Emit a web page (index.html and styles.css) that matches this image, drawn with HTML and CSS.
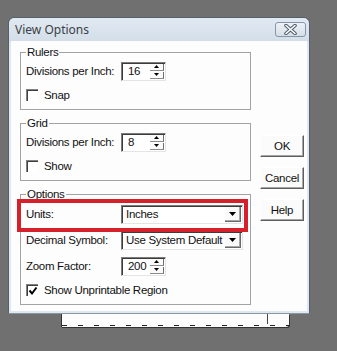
FILE: index.html
```html
<!DOCTYPE html>
<html>
<head>
  <title>View Options</title>
  <link rel="stylesheet" href="styles.css">
</head>
<body>

  <div class="window">
    <div class="titlebar">
      <span class="title">View Options</span>
      <div class="close-btn">
        <svg width="17" height="11" viewBox="0 0 17 11">
          <path d="M4 1.5 L13 9.5 M13 1.5 L4 9.5" stroke="#4e5a66" stroke-width="3.6" stroke-linecap="round"/>
          <path d="M4 1.5 L13 9.5 M13 1.5 L4 9.5" stroke="#fff" stroke-width="1.6" stroke-linecap="round"/>
        </svg>
      </div>
    </div>

    <div class="client">
      <div class="groups">
        <fieldset class="group">
          <legend>Rulers</legend>
          <div class="row first">
            <span class="label">Divisions per Inch:</span>
            <div class="spin">
              <span class="spin-value">16</span>
              <div class="spin-btns">
                <div class="spin-btn"><svg width="5" height="3" viewBox="0 0 5 3"><path d="M2.5 0 L5 3 L0 3 Z" fill="#000"/></svg></div>
                <div class="spin-btn"><svg width="5" height="3" viewBox="0 0 5 3"><path d="M0 0 L5 0 L2.5 3 Z" fill="#000"/></svg></div>
              </div>
            </div>
          </div>
          <div class="row check-row">
            <span class="checkbox"></span>
            <span>Snap</span>
          </div>
        </fieldset>

        <fieldset class="group">
          <legend>Grid</legend>
          <div class="row first">
            <span class="label">Divisions per Inch:</span>
            <div class="spin">
              <span class="spin-value">8</span>
              <div class="spin-btns">
                <div class="spin-btn"><svg width="5" height="3" viewBox="0 0 5 3"><path d="M2.5 0 L5 3 L0 3 Z" fill="#000"/></svg></div>
                <div class="spin-btn"><svg width="5" height="3" viewBox="0 0 5 3"><path d="M0 0 L5 0 L2.5 3 Z" fill="#000"/></svg></div>
              </div>
            </div>
          </div>
          <div class="row check-row">
            <span class="checkbox"></span>
            <span>Show</span>
          </div>
        </fieldset>

        <fieldset class="group">
          <legend>Options</legend>
          <div class="row options-first">
            <span class="label">Units:</span>
            <div class="combo">
              <span class="combo-value">Inches</span>
              <div class="combo-btn"><svg width="7" height="4" viewBox="0 0 7 4"><path d="M0 0 L7 0 L3.5 4 Z" fill="#000"/></svg></div>
            </div>
          </div>
          <div class="row options-row">
            <span class="label">Decimal Symbol:</span>
            <div class="combo">
              <span class="combo-value">Use System Default</span>
              <div class="combo-btn"><svg width="7" height="4" viewBox="0 0 7 4"><path d="M0 0 L7 0 L3.5 4 Z" fill="#000"/></svg></div>
            </div>
          </div>
          <div class="row options-row">
            <span class="label">Zoom Factor:</span>
            <div class="spin">
              <span class="spin-value">200</span>
              <div class="spin-btns">
                <div class="spin-btn"><svg width="5" height="3" viewBox="0 0 5 3"><path d="M2.5 0 L5 3 L0 3 Z" fill="#000"/></svg></div>
                <div class="spin-btn"><svg width="5" height="3" viewBox="0 0 5 3"><path d="M0 0 L5 0 L2.5 3 Z" fill="#000"/></svg></div>
              </div>
            </div>
          </div>
          <div class="row check-row">
            <span class="checkbox">
              <svg width="10" height="10" viewBox="0 0 10 10"><path d="M1.5 4.5 L4 7.5 L8.5 1.5" stroke="#000" stroke-width="2" fill="none"/></svg>
            </span>
            <span>Show Unprintable Region</span>
          </div>
        </fieldset>
      </div>

      <div class="buttons">
        <div class="button">OK</div>
        <div class="button">Cancel</div>
        <div class="button">Help</div>
      </div>
    </div>
  </div>

  <div class="strip">
    <div class="strip-inner"></div>
    <div class="strip-dash"></div>
  </div>

  <!-- red annotation box drawn over the Units row -->
  <div class="highlight"></div>

</body>
</html>
```

FILE: styles.css
```css
body {
  margin: 0;
  height: 351px;
  overflow: hidden;
  background-color: #707070;
  position: relative;
  font-family: "Liberation Sans", Arial, sans-serif;
  font-size: 11.5px;
  letter-spacing: -0.3px;
  color: #111;
}

.window {
  margin: 17px 0 0 8px;
  width: 302px;
  height: 297px;
  box-sizing: border-box;
  border: 1px solid #55606b;
  border-bottom-color: #8a96a2;
  border-radius: 6px 6px 0 0;
  background: linear-gradient(#e1e9f2, #d3dee9 24px, #dfe7ef 24px);
  padding: 0 2px 2px 2px;
}

.titlebar {
  height: 23px;
  display: flex;
  align-items: center;
  justify-content: space-between;
  padding: 0 1px 0 4px;
}

.title {
  font-family: "Noto Sans", "Open Sans", sans-serif;
  font-size: 12px;
  letter-spacing: 0;
  color: #3a3f45;
}

.close-btn {
  width: 31px;
  height: 15px;
  box-sizing: border-box;
  border: 1px solid #8796a6;
  border-radius: 3px;
  background: linear-gradient(#eef2f7, #d5dee8);
  display: flex;
  align-items: center;
  justify-content: center;
}

.client {
  height: 270px;
  background-color: #fdfdfd;
  display: flex;
}

.groups {
  width: 231px;
  margin-left: 9px;
}

.group {
  margin: 6px 0 0 0;
  padding: 0 5px 4px 5px;
  border: 1px solid #a3a3a3;
  min-width: 0;
}

.group:first-child {
  margin-top: 4px;
}

legend {
  line-height: 14px;
  padding: 0 1px;
}

.row {
  display: flex;
  align-items: center;
  height: 20px;
}

.row.first {
  margin-top: 2px;
}

.row.check-row {
  margin-top: 4px;
}

.row.options-first {
  margin-top: 3px;
}

.row.options-row {
  margin-top: 6px;
}

.label {
  width: 95px;
  flex-shrink: 0;
  white-space: nowrap;
}

.spin {
  width: 45px;
  height: 19px;
  box-sizing: border-box;
  display: flex;
  background-color: #fff;
  border-top: 1px solid #7b7b7b;
  border-left: 1px solid #7b7b7b;
  border-right: 1px solid #e4e4e4;
  border-bottom: 1px solid #e4e4e4;
  box-shadow: inset 1px 1px 0 #3c3c3c;
}

.spin-value {
  flex: 1;
  padding-left: 6px;
  line-height: 17px;
}

.spin-btns {
  width: 14px;
  display: flex;
  flex-direction: column;
  padding: 1px 1px 1px 0;
  gap: 1px;
}

.spin-btn {
  flex: 1;
  display: flex;
  align-items: center;
  justify-content: center;
  background-color: #fafafa;
  border-right: 1px solid #6f6f6f;
  border-bottom: 1px solid #8c8c8c;
}

.combo {
  width: 122px;
  height: 19px;
  box-sizing: border-box;
  display: flex;
  background-color: #fff;
  border-top: 1px solid #7b7b7b;
  border-left: 1px solid #7b7b7b;
  border-right: 1px solid #e4e4e4;
  border-bottom: 1px solid #e4e4e4;
  box-shadow: inset 1px 1px 0 #3c3c3c;
}

.combo-value {
  flex: 1;
  padding-left: 4px;
  line-height: 17px;
  white-space: nowrap;
}

.combo-btn {
  width: 16px;
  margin: 1px 1px 1px 0;
  box-sizing: border-box;
  display: flex;
  align-items: center;
  justify-content: center;
  background-color: #fafafa;
  border-right: 1px solid #6a6a6a;
  border-bottom: 1px solid #6a6a6a;
  box-shadow: inset -1px -1px 0 #a8a8a8;
}

.checkbox {
  width: 12px;
  height: 12px;
  box-sizing: border-box;
  margin-right: 6px;
  background-color: #fff;
  border-top: 1px solid #808080;
  border-left: 1px solid #808080;
  box-shadow: inset 1px 1px 0 #404040;
  display: flex;
  align-items: center;
  justify-content: center;
}

.buttons {
  margin-left: 9px;
  padding-top: 94px;
  display: flex;
  flex-direction: column;
  gap: 10px;
}

.button {
  width: 44px;
  height: 22px;
  box-sizing: border-box;
  display: flex;
  align-items: center;
  justify-content: center;
  background-color: #fbfbfb;
  border-top: 1px solid #fff;
  border-left: 1px solid #fff;
  border-right: 1px solid #5e5e5e;
  border-bottom: 1px solid #5e5e5e;
  box-shadow: inset -1px -1px 0 #a6a6a6;
}

.strip {
  margin-left: 61px;
  width: 227px;
  height: 13px;
  background-color: #fdfdfd;
  border-left: 1px solid #333;
  border-bottom-right-radius: 3px;
  box-shadow: 1px 1px 0 #333;
  display: flex;
  flex-direction: column;
}

.strip-inner {
  width: 205px;
  height: 10px;
  border-right: 1px solid #444;
}

.strip-dash {
  margin-top: 1px;
  height: 1px;
  background: repeating-linear-gradient(to right, #222 0 5px, transparent 5px 16px);
}

.highlight {
  position: absolute;
  left: 17px;
  top: 199px;
  width: 231px;
  height: 33px;
  box-sizing: border-box;
  border: 4px solid #d6212c;
}
```
